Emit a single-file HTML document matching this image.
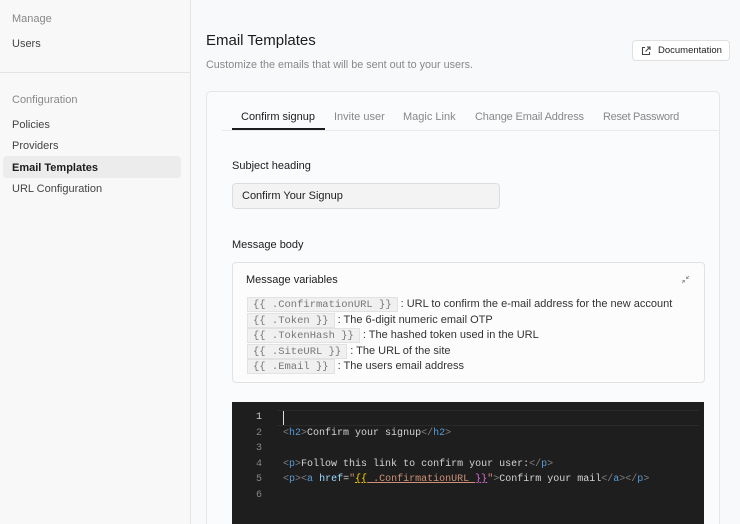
<!DOCTYPE html>
<html><head><meta charset="utf-8"><style>
*{margin:0;padding:0;box-sizing:border-box}
html,body{width:740px;height:524px;overflow:hidden}
body{background:#f8f9fa;font-family:"Liberation Sans",sans-serif;position:relative;color:#1c1c1c}
.sb{position:absolute;left:0;top:0;width:191px;height:524px;background:#f8f8f8;border-right:1px solid #e4e4e4}
.sb .t{position:absolute;left:12px;font-size:11px;color:#444}
.sb .h{color:#888}
.sb .hr{position:absolute;left:0;top:72px;width:190px;height:1px;background:#e4e4e4}
.sel{position:absolute;left:3px;top:156px;width:178px;height:22px;background:#ececec;border-radius:4px}
.a{position:absolute}
.card{position:absolute;left:206px;top:91px;width:514px;height:440px;background:#fafbfc;border:1px solid #e6e6e6;border-radius:5px}
.tab{position:absolute;top:111px;font-size:11px;color:#888}
.mono{font-family:"Liberation Mono",monospace}
.var{display:inline-block;background:#f0f0f0;border:1px solid #e2e2e2;color:#777;font-size:10.5px;padding:0 5px;height:15px;line-height:14px;margin-right:3px}
.vl{height:15.5px;font-size:11px;color:#333;white-space:nowrap}
.code{position:absolute;left:232px;top:402px;width:472px;height:130px;background:#1e1e1e}
.ln{position:absolute;left:0;width:30px;text-align:right;font-size:10px;color:#858585}
.cl{position:absolute;left:51px;font-size:10px;color:#d4d4d4;white-space:pre}
.tg{color:#808080}.tn{color:#569cd6}.at{color:#9cdcfe}.st{color:#ce9178}
</style></head><body>
<div class="sb">
<div class="t h" style="top:13px">Manage</div>
<div class="t" style="top:38px">Users</div>
<div class="hr"></div>
<div class="t h" style="top:94px">Configuration</div>
<div class="t" style="top:119px">Policies</div>
<div class="t" style="top:140px">Providers</div>
<div class="sel"></div>
<div class="t" style="top:162px;font-weight:bold;color:#1c1c1c">Email Templates</div>
<div class="t" style="top:183px">URL Configuration</div>
</div>
<div class="a" style="left:206px;top:32px;font-size:15px;color:#1c1c1c">Email Templates</div>
<div class="a" style="left:206px;top:59px;font-size:10.8px;color:#888">Customize the emails that will be sent out to your users.</div>
<div class="a" style="left:632px;top:40px;width:98px;height:21px;border:1px solid #e0e0e0;border-radius:4px;background:#fff;font-size:9.5px;line-height:19px;padding-left:25px;color:#222">Documentation
<svg style="position:absolute;left:8px;top:5px" width="10" height="10" viewBox="0 0 10 10" fill="none" stroke="#444" stroke-width="1.1"><path d="M4 1.5H1.5v7h7V6M6 1h3v3M9 1L4.5 5.5"/></svg></div>
<div class="card"></div>
<div class="tab" style="left:241px;color:#1c1c1c">Confirm signup</div>
<div class="tab" style="left:334px">Invite user</div>
<div class="tab" style="left:403px">Magic Link</div>
<div class="tab" style="left:475px;letter-spacing:-0.15px">Change Email Address</div>
<div class="tab" style="left:603px;letter-spacing:-0.3px">Reset Password</div>
<div class="a" style="left:222px;top:130px;width:498px;height:1px;background:#ebebeb"></div>
<div class="a" style="left:232px;top:128px;width:93px;height:2px;background:#1c1c1c"></div>
<div class="a" style="left:232px;top:160px;font-size:11px">Subject heading</div>
<div class="a" style="left:232px;top:183px;width:268px;height:26px;background:#f3f3f3;border:1px solid #ddd;border-radius:4px;font-size:11px;line-height:25px;padding-left:9px">Confirm Your Signup</div>
<div class="a" style="left:232px;top:239px;font-size:11px">Message body</div>
<div class="a" style="left:232px;top:262px;width:473px;height:121px;background:#fcfcfc;border:1px solid #e2e2e2;border-radius:4px"></div>
<div class="a" style="left:246px;top:274px;font-size:11px">Message variables</div>
<svg class="a" style="left:681px;top:275px" width="9" height="9" viewBox="0 0 9 9" stroke="#999" fill="none" stroke-width="0.9"><path d="M8 1L5.5 3.5M5.5 1.5v2h2M1 8l2.5-2.5M1.5 5.5h2v2"/></svg>
<div class="a" style="left:247px;top:297px">
<div class="vl"><span class="var mono">{{ .ConfirmationURL }}</span>: URL to confirm the e-mail address for the new account</div>
<div class="vl"><span class="var mono">{{ .Token }}</span>: The 6-digit numeric email OTP</div>
<div class="vl"><span class="var mono">{{ .TokenHash }}</span>: The hashed token used in the URL</div>
<div class="vl"><span class="var mono">{{ .SiteURL }}</span>: The URL of the site</div>
<div class="vl"><span class="var mono">{{ .Email }}</span>: The users email address</div>
</div>
<div class="code mono">
<div class="a" style="left:45px;top:8px;width:422px;height:16px;border-top:1px solid #2a2a2a;border-bottom:1px solid #2a2a2a"></div>
<div class="a" style="left:51px;top:9px;width:1px;height:14px;background:#ddd"></div>
<div class="ln" style="top:10px;color:#ccc">1</div>
<div class="ln" style="top:26px">2</div><div class="cl" style="top:26px"><span class="tg">&lt;</span><span class="tn">h2</span><span class="tg">&gt;</span>Confirm your signup<span class="tg">&lt;/</span><span class="tn">h2</span><span class="tg">&gt;</span></div>
<div class="ln" style="top:41px">3</div>
<div class="ln" style="top:57px">4</div><div class="cl" style="top:57px"><span class="tg">&lt;</span><span class="tn">p</span><span class="tg">&gt;</span>Follow this link to confirm your user:<span class="tg">&lt;/</span><span class="tn">p</span><span class="tg">&gt;</span></div>
<div class="ln" style="top:72px">5</div><div class="cl" style="top:72px"><span class="tg">&lt;</span><span class="tn">p</span><span class="tg">&gt;&lt;</span><span class="tn">a</span> <span class="at">href</span>=<span class="st">"<span style="color:#ffd700;text-decoration:underline">{{</span><span style="text-decoration:underline"> .ConfirmationURL </span><span style="color:#da70d6;text-decoration:underline">}}</span>"</span><span class="tg">&gt;</span>Confirm your mail<span class="tg">&lt;/</span><span class="tn">a</span><span class="tg">&gt;&lt;/</span><span class="tn">p</span><span class="tg">&gt;</span></div>
<div class="ln" style="top:88px">6</div>
</div>
</body></html>
